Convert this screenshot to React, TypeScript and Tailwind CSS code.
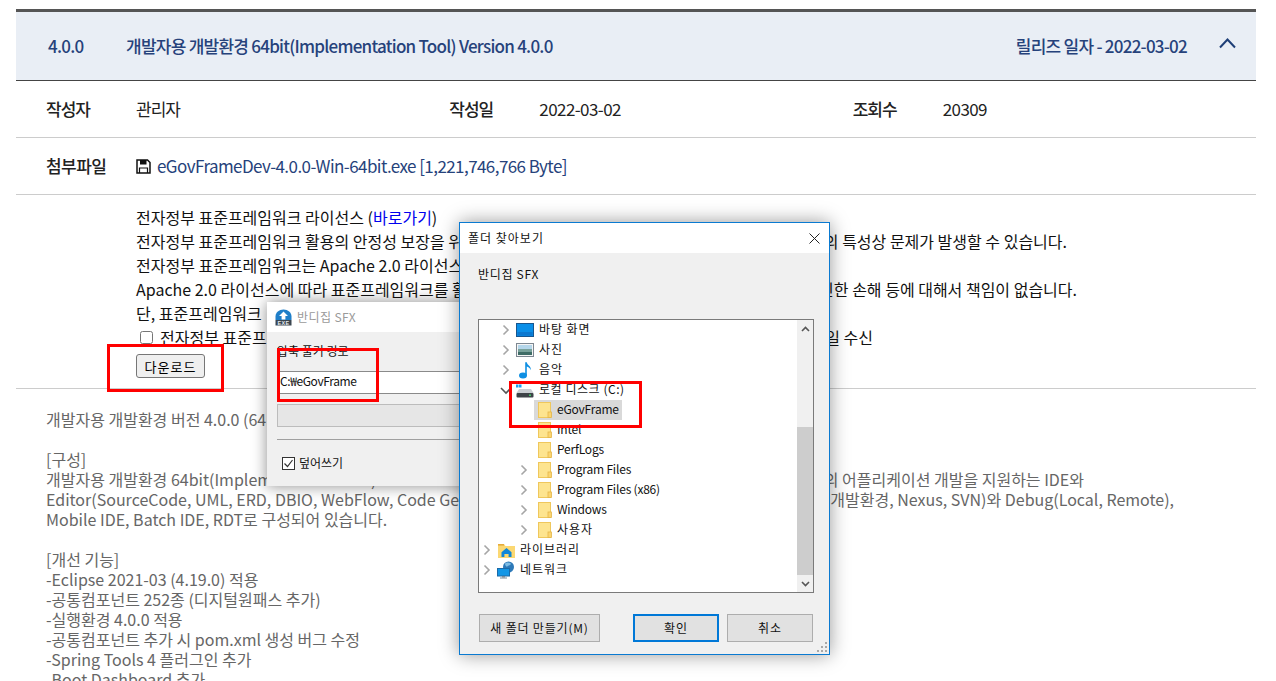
import React from "react";

const FONT = { fontFamily: '"Noto Sans CJK KR", "Noto Sans", sans-serif' };

function Chevron({ open }: { open?: boolean }) {
  return (
    <svg width="16" height="16" viewBox="0 0 16 16" fill="none">
      {open ? (
        <path d="M3 6l5 5 5-5" stroke="#555" strokeWidth="1.6" />
      ) : (
        <path d="M5.5 3.5l4.5 4.5-4.5 4.5" stroke="#a6a6a6" strokeWidth="1.6" />
      )}
    </svg>
  );
}

function Folder() {
  return (
    <svg width="14" height="16" viewBox="0 0 14 16">
      <rect x="0.5" y="0.5" width="12" height="15" fill="#fde48f" stroke="#efc75c" />
      <rect x="10" y="10" width="3.5" height="5.5" fill="#fcd570" stroke="#e3b64a" strokeWidth="0.8" />
    </svg>
  );
}

function Desktop() {
  return (
    <svg width="18" height="14" viewBox="0 0 18 14">
      <rect x="0.5" y="0.5" width="17" height="13" fill="#0a8fe8" stroke="#17568f" />
      <rect x="1.5" y="9" width="15" height="3.6" fill="#0c78cf" />
    </svg>
  );
}

function Pictures() {
  return (
    <svg width="18" height="14" viewBox="0 0 18 14">
      <rect x="0.5" y="0.5" width="17" height="13" fill="#f4f4f4" stroke="#7d8791" />
      <rect x="2" y="2" width="14" height="4" fill="#b4d6ea" />
      <path d="M2 6h14v3H2z" fill="#78a19a" />
      <path d="M2 9h14v3H2z" fill="#3f6c66" />
    </svg>
  );
}

function Music() {
  return (
    <svg width="14" height="18" viewBox="0 0 14 18">
      <ellipse cx="5" cy="14.5" rx="4" ry="3" fill="#0e8fe3" />
      <path d="M7.2 1.2h1.6c.4 3 4.5 3.6 4 8-.8-2.2-2.4-3.2-4-3.6V14.5H7.2z" fill="#0e8fe3" />
    </svg>
  );
}

function Drive() {
  return (
    <svg width="18" height="16" viewBox="0 0 18 16">
      <rect x="0" y="0" width="2.5" height="2.5" fill="#1aa0f0" />
      <rect x="3" y="0" width="2.5" height="2.5" fill="#1aa0f0" />
      <rect x="0" y="3" width="2.5" height="2.5" fill="#1aa0f0" />
      <rect x="3" y="3" width="2.5" height="2.5" fill="#1aa0f0" />
      <path d="M3 7h12l2.5 4H.5z" fill="#c9ced2" />
      <rect x="0.5" y="11" width="17" height="4.5" rx="1" fill="#3d4347" />
      <rect x="13" y="12.5" width="2" height="1.4" fill="#49d36b" />
    </svg>
  );
}

function Library() {
  return (
    <svg width="17" height="15" viewBox="0 0 17 15">
      <path d="M0 1h6l1.5 2H17v12H0z" fill="#fbd873" />
      <rect x="0" y="1" width="6" height="1.6" fill="#e5ab3a" />
      <path d="M8.5 5L13.5 9.2V14H10.6V11H6.4V14H3.5V9.2z" fill="#0f86d8" />
    </svg>
  );
}

function Network() {
  return (
    <svg width="18" height="18" viewBox="0 0 18 18">
      <circle cx="11.5" cy="6" r="5.5" fill="#2d79b8" />
      <path d="M8 2.5c2-1.5 5-1 6 .5-1 2-3 1-4 3-1-1-2-1.5-2-3.5z" fill="#7fbde4" />
      <rect x="0.5" y="7.5" width="12" height="7.5" fill="#1296e6" stroke="#1a6aa8" />
      <rect x="5" y="15" width="3" height="1.5" fill="#7a8a96" />
      <rect x="3" y="16.5" width="7" height="1" fill="#7a8a96" />
    </svg>
  );
}

function ExeIcon() {
  return (
    <svg width="17" height="17" viewBox="0 0 17 17">
      <path d="M0.5 11V7.5C0.5 3.5 4 0.5 8.5 0.5S16.5 3.5 16.5 7.5V11z" fill="#1f7fc9" />
      <path d="M8.5 2.5L13 7h-2.6v3.5H6.6V7H4z" fill="#fff" />
      <rect x="0.5" y="11" width="16" height="5.5" fill="#3b4650" />
      <text x="8.5" y="15.8" textAnchor="middle" fontSize="5.4" fontWeight="700" fill="#e6eaee" fontFamily="Liberation Sans, sans-serif">
        EXE
      </text>
    </svg>
  );
}

function Floppy() {
  return (
    <svg width="15" height="15" viewBox="0 0 15 15" fill="none">
      <path d="M1 1h10.5L14 3.5V14H1z" stroke="#111" strokeWidth="1.5" />
      <rect x="4" y="1" width="6.5" height="4.5" fill="#111" />
      <path d="M3.5 14V9h8v5" stroke="#111" strokeWidth="1.2" />
    </svg>
  );
}

function Row({
  pad,
  icon,
  label,
  chevron = "closed",
  selected,
  deep,
  spacing,
}: {
  pad: string;
  icon: React.ReactNode;
  label: string;
  chevron?: "closed" | "open" | "none";
  selected?: boolean;
  deep?: boolean;
  spacing: string;
}) {
  return (
    <div className={`flex items-center h-5 ${pad}`}>
      <span
        className={
          deep
            ? "w-4 h-4 -ml-[2px] mr-[2px] flex items-center justify-center shrink-0"
            : "w-4 h-4 flex items-center justify-center shrink-0"
        }
      >
        {chevron === "closed" && <Chevron />}
        {chevron === "open" && <Chevron open />}
      </span>
      <span className={selected ? "flex items-center h-5 bg-[#d9d9d9] pr-[3px]" : "flex items-center h-5 pr-[3px]"}>
        <span className="w-[20px] flex items-center justify-center shrink-0 ml-[1px]">{icon}</span>
        <span className={`h-5 leading-[18px] text-[#111] ${deep ? "ml-[2px]" : "ml-[4px]"} ${spacing}`}>{label}</span>
      </span>
    </div>
  );
}

const L0 = "pl-0";
const L1 = "pl-[19px]";
const L2 = "pl-[39px]";
const KO = "tracking-[0.95px]";
const EN = "tracking-[-0.2px]";

export default function App() {
  return (
    <div className="relative w-full h-[681px] overflow-hidden bg-white pt-[9px] pl-4 pr-5" style={FONT}>
      <div className="border-t-[3px] border-[#555555]">
        <div className="h-[69px] flex items-center bg-[#e9eef5] border-b border-[#444444] text-[#26427b] text-[17px] font-medium tracking-[-0.75px] pl-[32px] pr-[19px]">
          <span className="w-[78px]">4.0.0</span>
          <span className="flex-1">개발자용 개발환경 64bit(Implementation Tool) Version 4.0.0</span>
          <span>릴리즈 일자 - 2022-03-02</span>
          <svg className="ml-[31px] mb-[6px]" width="19" height="12" viewBox="0 0 19 12" fill="none">
            <path d="M2 10.5l7.5-8 7.5 8" stroke="#1f3f77" strokeWidth="2" />
          </svg>
        </div>

        <div className="h-[57px] grid grid-cols-3 items-center border-b border-[#cccccc] pl-[30px] text-[17px] text-[#222222] tracking-[-0.57px]">
          <div className="flex">
            <span className="w-[90px] font-medium tracking-[-1px]">작성자</span>
            <span className="tracking-[-1px]">관리자</span>
          </div>
          <div className="flex">
            <span className="w-[90px] font-medium tracking-[-1px]">작성일</span>
            <span>2022-03-02</span>
          </div>
          <div className="flex">
            <span className="w-[90px] font-medium tracking-[-1px]">조회수</span>
            <span>20309</span>
          </div>
        </div>

        <div className="h-[57px] flex items-center border-b border-[#cccccc] pl-[30px] text-[17px] tracking-[-0.57px]">
          <span className="w-[90px] font-medium text-[#222222]">첨부파일</span>
          <Floppy />
          <span className="ml-[6px] text-[#26427b]">eGovFrameDev-4.0.0-Win-64bit.exe [1,221,746,766 Byte]</span>
        </div>

        <div className="border-b border-[#cccccc] pl-[120px] pt-[10px] pb-[10px] text-[16px] leading-6 text-[#111111] whitespace-nowrap">
          <p>
            전자정부 표준프레임워크 라이선스 (<span className="text-[#0000ee]">바로가기</span>)
          </p>
          <p className="flex justify-between w-[931px]">
            <span>전자정부 표준프레임워크 활용의 안정성 보장을 위해</span>
            <span>의 특성상 문제가 발생할 수 있습니다.</span>
          </p>
          <p>전자정부 표준프레임워크는 Apache 2.0 라이선스를</p>
          <p className="flex justify-between w-[941px]">
            <span>Apache 2.0 라이선스에 따라 표준프레임워크를 활용</span>
            <span>인한 손해 등에 대해서 책임이 없습니다.</span>
          </p>
          <p>단, 표준프레임워크</p>
          <p className="flex justify-between items-center w-[737px]">
            <span className="flex items-center">
              <input type="checkbox" className="w-[13px] h-[13px] ml-[4px] mr-[7px]" readOnly />
              전자정부 표준프레임워크
            </span>
            <span>일 수신</span>
          </p>
          <button className="mt-[5px] w-[69px] h-6 flex items-center justify-center bg-[#efefef] border border-[#767676] rounded-[3px] text-[13px] leading-none tracking-[1.1px] text-black">
            다운로드
          </button>
        </div>

        <div className="pl-[30px] pt-[20px] text-[16px] leading-5 text-[#666666] whitespace-nowrap">
          <p>개발자용 개발환경 버전 4.0.0 (64bit)</p>
          <p className="h-5" />
          <p>[구성]</p>
          <p className="flex justify-between w-[1038px]">
            <span>개발자용 개발환경 64bit(Implementation Tool)</span>
            <span>의 어플리케이션 개발을 지원하는 IDE와</span>
          </p>
          <p className="flex justify-between w-[1128px]">
            <span>Editor(SourceCode, UML, ERD, DBIO, WebFlow, Code Generator)</span>
            <span>개발환경, Nexus, SVN)와 Debug(Local, Remote),</span>
          </p>
          <p>Mobile IDE, Batch IDE, RDT로 구성되어 있습니다.</p>
          <p className="h-5" />
          <p>[개선 기능]</p>
          <p>-Eclipse 2021-03 (4.19.0) 적용</p>
          <p>-공통컴포넌트 252종 (디지털원패스 추가)</p>
          <p>-실행환경 4.0.0 적용</p>
          <p>-공통컴포넌트 추가 시 pom.xml 생성 버그 수정</p>
          <p>-Spring Tools 4 플러그인 추가</p>
          <p>-Boot Dashboard 추가</p>
        </div>
      </div>

      {/* 반디집 SFX window */}
      <div className="absolute left-[267px] top-[302px] w-[240px] h-[184px] bg-[#f0f0f0] shadow-[0_0_14px_rgba(0,0,0,0.45)] text-[12px] text-[#111]">
        <div className="h-[30px] bg-white flex items-center pl-[8px] gap-[5px] text-[#9a9a9a] tracking-[0.4px]">
          <ExeIcon />
          <span>반디집 SFX</span>
        </div>
        <div className="pl-[10px]">
          <p className="mt-[10px] h-[18px] leading-[18px]">압축 풀기 경로</p>
          <div className="mt-[11px] h-[23px] bg-white border-y border-[#8a8a8a] flex items-center pl-[3px] pb-[3px] tracking-[-0.4px]">
            C:₩eGovFrame
          </div>
          <div className="mt-[10px] h-[23px] bg-[#e6e6e6] border border-[#bcbcbc]" />
          <div className="mt-[12px] border-t border-[#a0a0a0]" />
          <div className="mt-[14px] flex items-center gap-[4px] pl-[5px]">
            <span className="w-[13px] h-[13px] border border-[#333] bg-white flex items-center justify-center">
              <svg width="11" height="11" viewBox="0 0 11 11" fill="none">
                <path d="M1.5 5.5l3 3 5-6.5" stroke="#333" strokeWidth="1.2" />
              </svg>
            </span>
            <span>덮어쓰기</span>
          </div>
        </div>
      </div>

      {/* 폴더 찾아보기 window */}
      <div className="absolute left-[459px] top-[222px] w-[371px] h-[433px] bg-[#f0f0f0] border border-[#0a7ad1] shadow-[0_0_18px_rgba(0,0,0,0.4)] text-[12px] text-[#111]">
        <div className="h-[30px] bg-white flex items-center justify-between pl-[8px] pr-[9px] tracking-[1px]">
          <span>폴더 찾아보기</span>
          <svg width="11" height="11" viewBox="0 0 11 11" fill="none">
            <path d="M0.5 0.5l10 10M10.5 0.5l-10 10" stroke="#222" strokeWidth="1" />
          </svg>
        </div>
        <p className="ml-[18px] mt-[12px] h-[18px] leading-[18px] tracking-[0.7px]">반디집 SFX</p>
        <div className="ml-[18px] mt-[36px] w-[336px] h-[274px] bg-white border border-[#7a7a7a] flex">
          <div className="flex-1 overflow-hidden">
            <Row pad={L1} icon={<Desktop />} label="바탕 화면" spacing={KO} />
            <Row pad={L1} icon={<Pictures />} label="사진" spacing={KO} />
            <Row pad={L1} icon={<Music />} label="음악" spacing={KO} />
            <Row pad={L1} icon={<Drive />} label="로컬 디스크 (C:)" chevron="open" spacing="tracking-[0.55px]" />
            <Row pad={L2} deep icon={<Folder />} label="eGovFrame" chevron="none" selected spacing={EN} />
            <Row pad={L2} deep icon={<Folder />} label="Intel" chevron="none" spacing={EN} />
            <Row pad={L2} deep icon={<Folder />} label="PerfLogs" chevron="none" spacing={EN} />
            <Row pad={L2} deep icon={<Folder />} label="Program Files" spacing={EN} />
            <Row pad={L2} deep icon={<Folder />} label="Program Files (x86)" spacing={EN} />
            <Row pad={L2} deep icon={<Folder />} label="Windows" spacing={EN} />
            <Row pad={L2} deep icon={<Folder />} label="사용자" spacing={KO} />
            <Row pad={L0} icon={<Library />} label="라이브러리" spacing={KO} />
            <Row pad={L0} icon={<Network />} label="네트워크" spacing={KO} />
          </div>
          <div className="w-[16px] bg-[#f0f0f0] flex flex-col">
            <div className="h-[17px] flex items-center justify-center">
              <svg width="9" height="6" viewBox="0 0 9 6" fill="none">
                <path d="M1 5l3.5-3.5L8 5" stroke="#555" strokeWidth="1.6" />
              </svg>
            </div>
            <div className="h-[90px]" />
            <div className="h-[148px] bg-[#cdcdcd]" />
            <div className="flex-1 flex items-center justify-center">
              <svg width="9" height="6" viewBox="0 0 9 6" fill="none">
                <path d="M1 1l3.5 3.5L8 1" stroke="#555" strokeWidth="1.6" />
              </svg>
            </div>
          </div>
        </div>
        <div className="ml-[19px] mt-[21px] flex">
          <button className="w-[121px] h-[28px] bg-[#e1e1e1] border border-[#adadad] tracking-[0.8px]">
            새 폴더 만들기(M)
          </button>
          <button className="ml-[33px] w-[86px] h-[28px] bg-[#e1e1e1] border-2 border-[#0078d7] tracking-[1px]">확인</button>
          <button className="ml-[8px] w-[86px] h-[28px] bg-[#e1e1e1] border border-[#adadad] tracking-[1px]">취소</button>
        </div>
        <svg className="absolute right-[1px] bottom-[1px]" width="12" height="12" viewBox="0 0 12 12" fill="#a8a8a8">
          <rect x="9" y="1" width="2" height="2" />
          <rect x="5" y="5" width="2" height="2" />
          <rect x="9" y="5" width="2" height="2" />
          <rect x="1" y="9" width="2" height="2" />
          <rect x="5" y="9" width="2" height="2" />
          <rect x="9" y="9" width="2" height="2" />
        </svg>
      </div>

      {/* red annotation boxes */}
      <div className="absolute left-[107px] top-[344px] w-[117px] h-[48px] border-[3px] border-[#ff0000]" />
      <div className="absolute left-[277px] top-[348px] w-[102px] h-[54px] border-[3px] border-[#ff0000]" />
      <div className="absolute left-[509px] top-[381px] w-[133px] h-[47px] border-[3px] border-[#ff0000]" />
    </div>
  );
}
